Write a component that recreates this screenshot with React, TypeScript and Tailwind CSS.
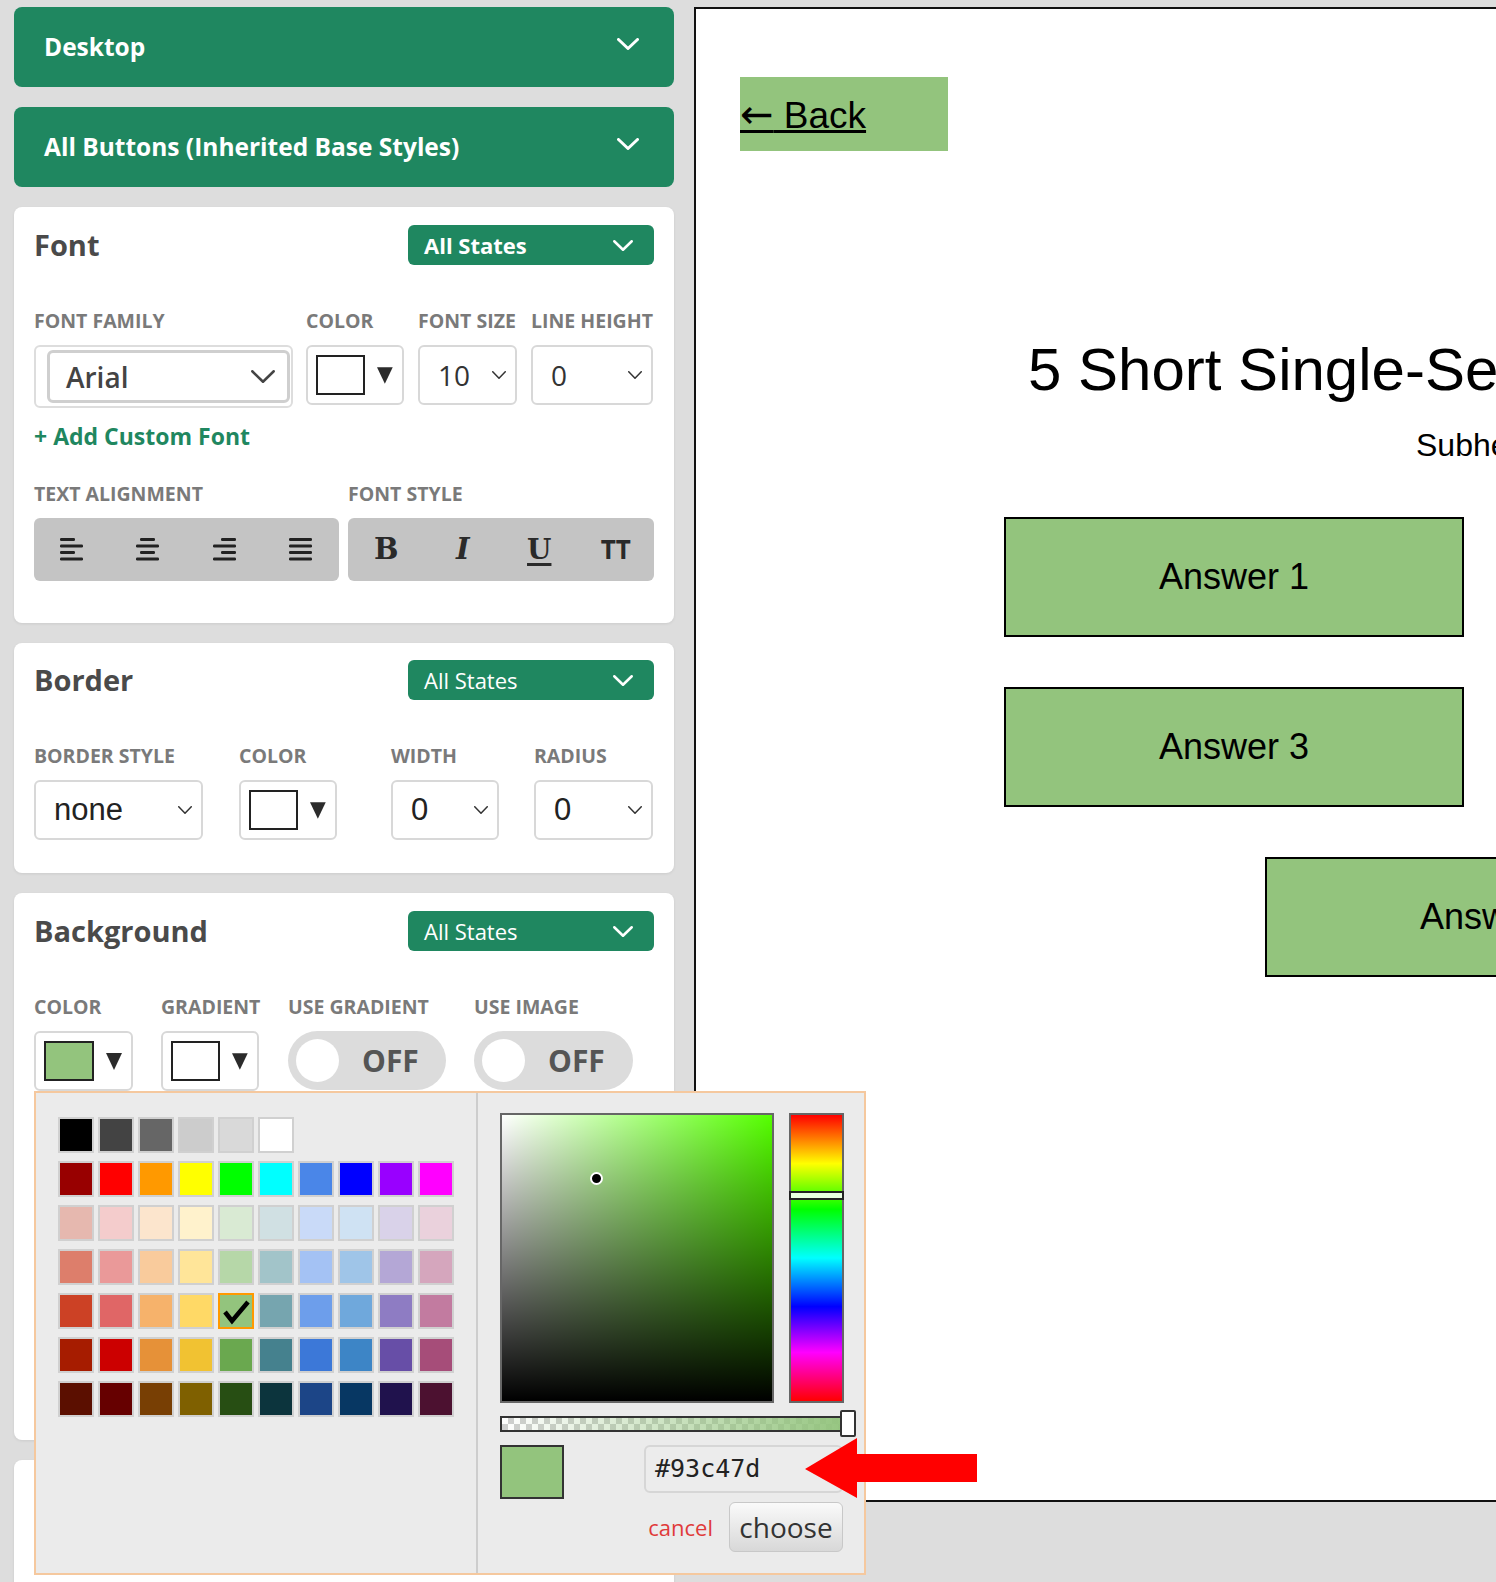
import React from "react";

function Chevron({ w = 22, h = 12, color = "#fff", sw = 3 }: { w?: number; h?: number; color?: string; sw?: number }) {
  return (
    <svg width={w} height={h} viewBox={`0 0 ${w} ${h}`}>
      <polyline
        points={`${sw / 2},${sw / 2} ${w / 2},${h - sw / 2} ${w - sw / 2},${sw / 2}`}
        fill="none"
        stroke={color}
        strokeWidth={sw}
        strokeLinecap="round"
        strokeLinejoin="round"
      />
    </svg>
  );
}

function Tri() {
  return (
    <svg width="16" height="17" viewBox="0 0 16 17">
      <polygon points="0,0 16,0 8,17" fill="#2b2b2b" />
    </svg>
  );
}

function HeaderBar({ label }: { label: string }) {
  return (
    <div className="h-[80px] rounded-lg bg-[#1f8760] flex items-center justify-between pl-[30px] pr-[35px] text-white font-bold text-[24.5px]">
      <span>{label}</span>
      <div className="-mt-[6px]">
        <Chevron />
      </div>
    </div>
  );
}

function StatesBtn({ bold }: { bold?: boolean }) {
  return (
    <div
      className={
        "w-[246px] h-[40px] rounded-md bg-[#1f8760] flex items-center justify-between pl-[16px] pr-[21px] text-white text-[22px] " +
        (bold ? "font-bold" : "font-normal")
      }
    >
      <span>All States</span>
      <Chevron w={20} h={11} sw={2.5} />
    </div>
  );
}

function Label({ children }: { children: React.ReactNode }) {
  return <div className="text-[19.5px] leading-[24px] font-bold text-[#7a7a7a] uppercase whitespace-nowrap">{children}</div>;
}

function Select({ value, w, serif }: { value: string; w: string; serif?: boolean }) {
  return (
    <div className={"h-[60px] border-2 border-[#d8d8d8] rounded-md bg-white flex items-center justify-between pl-[18px] pr-[9px] " + w}>
      <span
        className={
          serif
            ? "text-[31px] text-[#222] font-['Liberation_Sans',Arial,sans-serif]"
            : "text-[28px] text-[#333] font-medium"
        }
      >
        {value}
      </span>
      <Chevron w={14} h={8} color="#333" sw={1.5} />
    </div>
  );
}

function ColorBtn({ color, w }: { color: string; w: string }) {
  return (
    <div className={"h-[60px] border-2 border-[#d8d8d8] rounded-md bg-white flex items-center pl-[8px] pr-[9px] gap-[12px] " + w}>
      <div className="w-[50px] h-[40px] border-2 border-[#222]" style={{ backgroundColor: color }} />
      <Tri />
    </div>
  );
}

function Toggle({ w }: { w: string }) {
  return (
    <div className={"h-[59px] rounded-full bg-[#dcdcdc] flex items-center " + w}>
      <div className="w-[43px] h-[43px] rounded-full bg-white ml-[8px]" />
      <span className="ml-[23px] text-[30px] font-bold text-[#555]">OFF</span>
    </div>
  );
}

function AlignIcon({ type }: { type: "left" | "center" | "right" | "justify" }) {
  const lines = [15, 23, 15, 23];
  const full = 23;
  return (
    <svg width="24" height="23" viewBox="0 0 24 23">
      {lines.map((l, i) => {
        const len = type === "justify" ? full : l;
        let x = 0;
        if (type === "center") x = (full - len) / 2;
        if (type === "right") x = full - len;
        return <rect key={i} x={x} y={i * 6.5} width={len} height={3} rx={1.2} fill="#222" />;
      })}
    </svg>
  );
}

const palette: string[][] = [
  ["#000000", "#434343", "#666666", "#cccccc", "#d9d9d9", "#ffffff"],
  ["#980000", "#ff0000", "#ff9900", "#ffff00", "#00ff00", "#00ffff", "#4a86e8", "#0000ff", "#9900ff", "#ff00ff"],
  ["#e6b8af", "#f4cccc", "#fce5cd", "#fff2cc", "#d9ead3", "#d0e0e3", "#c9daf8", "#cfe2f3", "#d9d2e9", "#ead1dc"],
  ["#dd7e6b", "#ea9999", "#f9cb9c", "#ffe599", "#b6d7a8", "#a2c4c9", "#a4c2f4", "#9fc5e8", "#b4a7d6", "#d5a6bd"],
  ["#cc4125", "#e06666", "#f6b26b", "#ffd966", "#93c47d", "#76a5af", "#6d9eeb", "#6fa8dc", "#8e7cc3", "#c27ba0"],
  ["#a61c00", "#cc0000", "#e69138", "#f1c232", "#6aa84f", "#45818e", "#3c78d8", "#3d85c6", "#674ea7", "#a64d79"],
  ["#5b0f00", "#660000", "#783f04", "#7f6000", "#274e13", "#0c343d", "#1c4587", "#073763", "#20124d", "#4c1130"],
];

function ColorPicker() {
  return (
    <div className="absolute left-[34px] top-[1091px] w-[832px] h-[484px] border-2 border-[#f5c89e] bg-[#ebebeb] flex font-['Open_Sans',sans-serif]">
      <div className="w-[442px] h-full border-r-2 border-[#cdcdcd] pl-[22px] pt-[24px] flex flex-col gap-[8px]">
        {palette.map((row, ri) => (
          <div key={ri} className="flex gap-[4px]">
            {row.map((c) => {
              const sel = c === "#93c47d";
              return (
                <div
                  key={c}
                  className={"w-[36px] h-[36px] border-2 flex items-center justify-center " + (sel ? "border-[#ff9900]" : "border-[#d0d0d0]")}
                  style={{ backgroundColor: c }}
                >
                  {sel && (
                    <svg width="30" height="28" viewBox="0 0 30 28">
                      <polyline points="4,15 11,24 27,5" fill="none" stroke="#000" strokeWidth="4.5" strokeLinejoin="miter" />
                    </svg>
                  )}
                </div>
              );
            })}
          </div>
        ))}
      </div>
      <div className="flex-1 pl-[22px] pt-[20px]">
        <div className="flex gap-[15px]">
          <div className="w-[274px] h-[290px] border-2 border-[#666] bg-[#55ff00] relative">
            <div className="absolute inset-0 bg-linear-to-r from-white to-white/0" />
            <div className="absolute inset-0 bg-linear-to-t from-black to-black/0" />
            <div className="absolute left-[88px] top-[57px] w-[13px] h-[13px] rounded-full bg-black border-2 border-white" />
          </div>
          <div className="w-[55px] h-[290px] border-2 border-[#666] relative bg-[linear-gradient(to_bottom,#ff0000_0%,#ffff00_17%,#00ff00_33%,#00ffff_50%,#0000ff_67%,#ff00ff_83%,#ff0000_100%)]">
            <div className="absolute -left-[2px] -right-[2px] top-[76px] h-[9px] bg-[#e8ffe0] border-2 border-[#222]" />
          </div>
        </div>
        <div className="mt-[13px] w-[356px] h-[16px] border-2 border-[#333] relative bg-[repeating-conic-gradient(#cfcfcf_0_25%,#ffffff_0_50%)] bg-[length:12px_12px]">
          <div className="absolute inset-0 bg-linear-to-r from-[#93c47d00] to-[#93c47d]" />
          <div className="absolute -right-[2px] -top-[8px] w-[16px] h-[27px] bg-white border-2 border-[#333] rounded-[2px]" />
        </div>
        <div className="mt-[13px] flex items-start">
          <div className="w-[64px] h-[54px] border-2 border-[#333] bg-[#93c47d]" />
          <div className="ml-[80px] w-[199px] flex flex-col">
            <div className="h-[48px] rounded-md border-2 border-[#d6d6d6] bg-[#ececec] pl-[9px] flex items-center text-[25px] text-[#222] font-['DejaVu_Sans_Mono',monospace]">
              #93c47d
            </div>
            <div className="mt-[9px] flex items-center justify-end gap-[16px]">
              <span className="text-[22px] text-[#e03a3a]">cancel</span>
              <div className="w-[114px] h-[50px] rounded-md border border-[#c8c8c8] bg-linear-to-b from-[#fafafa] to-[#d8d8d8] flex items-center justify-center text-[28px] text-[#333]">
                choose
              </div>
            </div>
          </div>
        </div>
      </div>
    </div>
  );
}

function AnswerBox({ label }: { label: string }) {
  return (
    <div className="w-[460px] h-[120px] shrink-0 border-2 border-black bg-[#93c47d] flex items-center justify-center text-[36px]">
      {label}
    </div>
  );
}

function Preview() {
  return (
    <div className="w-[1600px] h-[1495px] shrink-0 border-2 border-[#111] bg-white overflow-hidden font-['Liberation_Sans',Arial,sans-serif] text-black">
      <div className="mt-[68px] ml-[44px] w-[208px] h-[74px] bg-[#93c47d] flex items-center">
        <span className="text-[37px] underline leading-none whitespace-nowrap">
          <span className="font-['DejaVu_Sans',sans-serif] text-[40px]">←</span> Back
        </span>
      </div>
      <div className="mt-[189px] ml-[332px] text-[60px] leading-none whitespace-nowrap">5 Short Single-Select Questions</div>
      <div className="mt-[29px] ml-[720px] text-[32px] leading-none whitespace-nowrap">Subheading</div>
      <div className="mt-[56px] ml-[308px] flex gap-[62px]">
        <AnswerBox label="Answer 1" />
        <AnswerBox label="Answer 2" />
      </div>
      <div className="mt-[50px] ml-[308px] flex gap-[62px]">
        <AnswerBox label="Answer 3" />
        <AnswerBox label="Answer 4" />
      </div>
      <div className="mt-[50px] ml-[569px] flex">
        <AnswerBox label="Answer 5" />
      </div>
    </div>
  );
}

export default function App() {
  return (
    <div className="w-[1496px] h-[1582px] overflow-hidden bg-[#dddddd] relative font-['Open_Sans',sans-serif]">
      <div className="flex pt-[7px] pl-[14px] gap-[20px]">
        <div className="w-[660px] shrink-0 flex flex-col gap-[20px]">
          <HeaderBar label="Desktop" />
          <HeaderBar label="All Buttons (Inherited Base Styles)" />

          {/* Font */}
          <div className="bg-white rounded-lg shadow-[0_1px_3px_rgba(0,0,0,0.08)] px-[20px] pt-[18px] h-[416px]">
            <div className="flex items-center justify-between h-[40px]">
              <span className="text-[29px] font-bold text-[#4a4a4a]">Font</span>
              <StatesBtn bold />
            </div>
            <div className="mt-[44px] flex">
              <div className="w-[259px] flex flex-col gap-[12px]">
                <Label>Font Family</Label>
                <div className="h-[63px] -mb-[3px] border-2 border-[#dddddd] rounded-md pl-[11px] pr-[1px] py-[3px]">
                  <div className="h-full border-[3px] border-[#cfcfcf] rounded-md bg-white flex items-center justify-between pl-[16px] pr-[12px]">
                    <span className="text-[28px] font-semibold text-[#444]">Arial</span>
                    <Chevron w={24} h={13} color="#444" sw={2.5} />
                  </div>
                </div>
              </div>
              <div className="ml-[13px] w-[98px] flex flex-col gap-[12px]">
                <Label>Color</Label>
                <ColorBtn color="#ffffff" w="w-[98px]" />
              </div>
              <div className="ml-[14px] w-[99px] flex flex-col gap-[12px]">
                <Label>Font Size</Label>
                <Select value="10" w="w-[99px]" />
              </div>
              <div className="ml-[14px] w-[122px] flex flex-col gap-[12px]">
                <Label>Line Height</Label>
                <Select value="0" w="w-[122px]" />
              </div>
            </div>
            <div className="mt-[16px] text-[23px] leading-[30px] font-bold text-[#1f8760]">+ Add Custom Font</div>
            <div className="mt-[31px] flex">
              <div className="w-[305px]">
                <Label>Text Alignment</Label>
              </div>
              <div className="ml-[9px]">
                <Label>Font Style</Label>
              </div>
            </div>
            <div className="mt-[12px] flex gap-[9px]">
              <div className="w-[305px] h-[63px] rounded-md bg-[#c4c4c4] grid grid-cols-4 place-items-center">
                <AlignIcon type="left" />
                <AlignIcon type="center" />
                <AlignIcon type="right" />
                <AlignIcon type="justify" />
              </div>
              <div className="w-[306px] h-[63px] rounded-md bg-[#c4c4c4] grid grid-cols-4 place-items-center text-[#2a2a2a]">
                <span className="text-[29px] font-bold font-['DejaVu_Serif',serif]">B</span>
                <span className="text-[29px] font-bold italic font-['DejaVu_Serif',serif]">I</span>
                <span className="text-[28px] font-bold underline decoration-[3px] underline-offset-[4px] font-['DejaVu_Serif',serif]">U</span>
                <span className="text-[26px] font-bold">TT</span>
              </div>
            </div>
          </div>

          {/* Border */}
          <div className="bg-white rounded-lg shadow-[0_1px_3px_rgba(0,0,0,0.08)] px-[20px] pt-[17px] h-[230px]">
            <div className="flex items-center justify-between h-[40px]">
              <span className="text-[29px] font-bold text-[#4a4a4a]">Border</span>
              <StatesBtn />
            </div>
            <div className="mt-[44px] flex">
              <div className="w-[169px] flex flex-col gap-[12px]">
                <Label>Border Style</Label>
                <Select value="none" w="w-[169px]" serif />
              </div>
              <div className="ml-[36px] w-[98px] flex flex-col gap-[12px]">
                <Label>Color</Label>
                <ColorBtn color="#ffffff" w="w-[98px]" />
              </div>
              <div className="ml-[54px] w-[108px] flex flex-col gap-[12px]">
                <Label>Width</Label>
                <Select value="0" w="w-[108px]" serif />
              </div>
              <div className="ml-[35px] w-[119px] flex flex-col gap-[12px]">
                <Label>Radius</Label>
                <Select value="0" w="w-[119px]" serif />
              </div>
            </div>
          </div>

          {/* Background */}
          <div className="bg-white rounded-lg shadow-[0_1px_3px_rgba(0,0,0,0.08)] px-[20px] pt-[18px] h-[547px]">
            <div className="flex items-center justify-between h-[40px]">
              <span className="text-[29px] font-bold text-[#4a4a4a]">Background</span>
              <StatesBtn />
            </div>
            <div className="mt-[44px] flex">
              <div className="w-[99px] flex flex-col gap-[12px]">
                <Label>Color</Label>
                <ColorBtn color="#93c47d" w="w-[99px]" />
              </div>
              <div className="ml-[28px] w-[98px] flex flex-col gap-[12px]">
                <Label>Gradient</Label>
                <ColorBtn color="#ffffff" w="w-[98px]" />
              </div>
              <div className="ml-[29px] w-[158px] flex flex-col gap-[12px]">
                <Label>Use Gradient</Label>
                <Toggle w="w-[158px]" />
              </div>
              <div className="ml-[28px] w-[159px] flex flex-col gap-[12px]">
                <Label>Use Image</Label>
                <Toggle w="w-[159px]" />
              </div>
            </div>
          </div>

          <div className="bg-white rounded-lg shadow-[0_1px_3px_rgba(0,0,0,0.08)] h-[300px]" />
        </div>
        <Preview />
      </div>

      <ColorPicker />

      <svg className="absolute left-[800px] top-[1435px]" width="180" height="66" viewBox="0 0 180 66">
        <polygon points="5,34 57,3 57,19 177,19 177,47 57,47 57,63" fill="#ff0000" />
      </svg>
    </div>
  );
}
